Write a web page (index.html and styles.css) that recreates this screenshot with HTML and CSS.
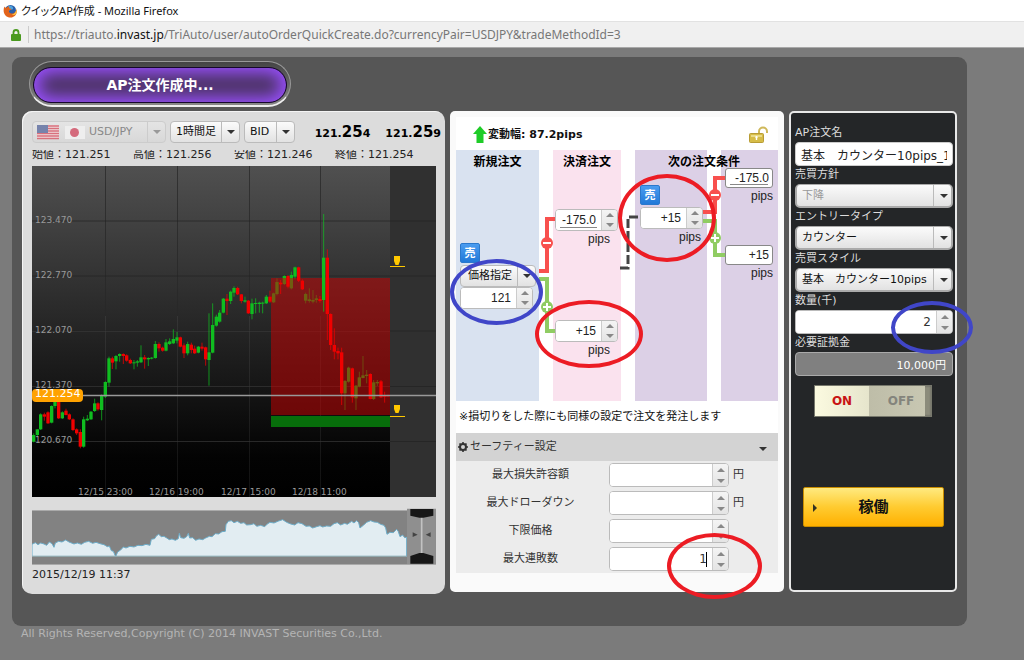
FILE: index.html
```html
<!DOCTYPE html>
<html lang="ja">
<head>
<meta charset="utf-8">
<title>クイックAP作成</title>
<link rel="stylesheet" href="styles.css">
</head>
<body>
<header class="titlebar">
  <svg class="fox" viewBox="0 0 14 14" aria-hidden="true">
    <circle cx="7.500" cy="6.500" r="5.500" fill="#2a5ea8"/>
    <path d="M5 2c3-1 6 1 5 3-1 1-3 0-4 2" fill="#4fa3dd"/>
    <path d="M1.500 2.500C.2 5 .2 9 2.500 11.500c3 3 8 2.600 10.300-.8 1-1.600 1.300-3.600.8-5.700-.6 3-2.600 4.800-5 4.500-2-.3-3-1.700-2.500-3 .6-.6 1.600-.3 2.200-.7.400-.5-.8-1.300-1.800-1.300C5.800 3.500 6 2.800 6.500 2.500 5 2.300 4 3 3.500 3.700 2.500 3.800 2 3.500 1.500 2.500z" fill="#e2641b"/>
    <path d="M13.600 5c-.4 3-2 5.200-5 5.600 2 .8 3.700.2 4.600-.9.700-1.400.8-3.200.4-4.700z" fill="#f9c440"/>
  </svg>
  <span>クイックAP作成 - Mozilla Firefox</span>
</header>
<div class="urlbar">
  <svg class="padlock" viewBox="0 0 10 12" aria-hidden="true"><path d="M2.500 6V3.500a2.500 2.500 0 0 1 5 0V6" fill="none" stroke="#4a9a1f" stroke-width="1.800"/><rect x="0" y="5" width="10" height="7" rx="1" fill="#4a9a1f"/></svg>
  <span class="url">https://triauto.<b>invast.jp</b>/TriAuto/user/autoOrderQuickCreate.do?currencyPair=USDJPY&amp;tradeMethodId=3</span>
</div>

<main class="app">
  <h1 class="status"><span>AP注文作成中...</span></h1>
  <div class="panels">
    <section class="panel chart-panel">
      <div class="toolbar">
        <div class="pick pair">
          <svg class="flags" viewBox="0 0 48 16" aria-hidden="true">
            <path d="M0 1h22v14H0z" fill="#f0dfe1"/>
            <path d="M0 2h22M0 4.500h22M0 7h22M0 9.500h22M0 12h22M0 14.500h22" stroke="#d8707c" stroke-width="1.300"/>
            <path d="M0 1h11v8H0z" fill="#7683ac"/>
            <path d="M28 2h20v13H28z" fill="#eee"/><circle cx="37.500" cy="8.500" r="4.500" fill="#d46a7c"/>
          </svg>
          <select aria-label="通貨ペア" disabled><option>USD/JPY</option></select>
        </div>
        <div class="pick span"><select aria-label="足種"><option>1時間足</option></select></div>
        <div class="pick side"><select aria-label="売買"><option>BID</option></select></div>
        <div class="rates">
          <span>121.<b>25</b>4</span>
          <span>121.<b>25</b>9</span>
        </div>
      </div>
      <div class="ohlc"><span>始値：121.251</span><span>高値：121.256</span><span>安値：121.246</span><span>終値：121.254</span></div>
      <svg class="chart" viewBox="0 0 404 331" role="img" aria-label="USD/JPY 1時間足">
        <defs><linearGradient id="sky" x1="0" y1="0" x2="0" y2="1"><stop offset="0" stop-color="#505050"/><stop offset=".88" stop-color="#030303"/><stop offset="1" stop-color="#000"/></linearGradient></defs>
        <rect width="404" height="331" fill="url(#sky)"/>
        <path d="M73.500 0v331M145.500 0v331M217.500 0v331M288.500 0v331" stroke="#888" stroke-opacity=".14"/>
        <path d="M73.500 0v150M145.500 0v150M217.500 0v150M288.500 0v150" stroke="#222" stroke-opacity=".7"/>
        <rect x="358" width="46" height="331" fill="#303030"/>
        <path d="M0 55h404M0 110h404M0 165h404M0 220.500h404M0 275.500h404" stroke="#222" stroke-opacity=".7"/>
        <path d="M0 165.500h358M0 220.500h358M0 275.500h358" stroke="#888" stroke-opacity=".14"/>
        <g class="candles" id="up" transform="translate(-8 134) scale(.33333)"></g>
        <path d="M239 112H358V249H239z" fill="#cd0000" fill-opacity=".5"/>
        <path d="M239 250H358V261H239z" fill="#076e0b"/>
        <g class="candles" id="down" transform="translate(-8 134) scale(.33333)"></g>
        <path d="M0 229.500h404" stroke="#999" stroke-width="1.500"/>
        <g fill="#ffc800"><path d="M362 90h6v5l-1.500 4h-3l-1.500-4zM358 100h15v1h-15zM362 239h6v4l-1.500 4h-3l-1.500-4zM358 250h15v1h-15z"/></g>
        <g class="axis">
          <text x="3" y="57">123.470</text><text x="3" y="112">122.770</text><text x="3" y="167">122.070</text><text x="3" y="222">121.370</text><text x="3" y="277">120.670</text>
          <text x="46" y="329">12/15 23:00</text><text x="117" y="329">12/16 19:00</text><text x="189" y="329">12/17 15:00</text><text x="260" y="329">12/18 11:00</text>
        </g>
        <rect y="223" width="51" height="13" rx="4" fill="#ffa200"/>
        <text class="now" x="3" y="231">121.254</text>
      </svg>
      <svg class="overview" viewBox="0 0 404 58" aria-hidden="true">
        <rect y="2" width="404" height="55" fill="#828282"/>
        <path d="M0 2.500h375M0 56.500h404" stroke="#aaa"/>
        <g transform="translate(-8 -208) scale(.33333)">
          <path d="M24 733L34 728 42 734 50 729 60 732 68 736 76 726 84 731 90 742 94 729 104 724 114 726 125 720 135 726 150 732 160 729 172 733 182 727 194 724 206 730 216 727 228 731 240 734 250 740 256 738 262 752 268 754 275 770 281 756 290 750 298 741 306 744 318 739 330 741 342 736 354 737 366 733 378 736 382 718 392 716 397 708 404 703 412 710 420 709 428 714 436 719 444 717 454 721 463 716 466 700 470 713 480 715 488 710 493 700 497 714 506 713 515 721 525 717 536 719 545 714 556 709 564 710 574 701 584 702 594 695 604 694 606 674 613 664 622 662 630 668 640 664 650 670 660 668 668 675 680 674 690 671 698 679 710 676 722 680 730 672 738 667 750 669 764 663 776 659 788 667 800 672 812 675 822 668 834 671 846 679 856 678 866 684 878 680 888 677 896 681 908 678 920 679 930 671 940 668 950 675 962 670 970 673 983 664 990 669 998 662 1004 668 1008 684 1018 676 1028 667 1040 662 1050 666 1060 667 1070 673 1080 676 1085 684 1089 703 1098 697 1108 698 1118 688 1123 695 1128 710 1136 705 1142 713 1148 712V769H24z" fill="#e2edf2" stroke="#6cadc9" stroke-width="3"/>
          <path d="M24 769H1148" stroke="#98a8a8" stroke-width="3"/>
          <path d="M1149 626h87v166h-87z" fill="#8f8f8f"/>
          <path d="M1193 650v110" stroke="#c2c2c2" stroke-width="5"/>
          <path d="M1159 627h69v20l-30 6h-12l-27-6zM1159 791h69v-23l-30-9h-12l-27 9z" fill="#171717"/>
          <path d="M1166 697v14l15-7zM1220 697v14l-15-7z" fill="#444"/>
        </g>
      </svg>
      <time class="stamp">2015/12/19 11:37</time>
    </section>

    <section class="panel order-panel">
      <div class="range">
        <svg class="arrow-up" viewBox="0 0 14 17" aria-hidden="true"><path d="M7 0l7 8h-3.500v9h-7V8H0z" fill="#1fcc28"/></svg>
        <strong>変動幅: 87.2pips</strong>
        <svg class="unlock" viewBox="0 0 20 18" aria-hidden="true"><path d="M10 8V5.500a4 4 0 0 1 8 0V7" fill="none" stroke="#cfb85a" stroke-width="2"/><rect x=".5" y="7.500" width="14" height="9" rx="1" fill="#d6bc48" stroke="#b89c35"/><path d="M2 9h11v2H2z" fill="#eadb87"/><path d="M7.500 10a1.200 1.200 0 0 1 .7 2.200V14H6.800v-1.800A1.200 1.200 0 0 1 7.500 10z" fill="#fff"/></svg>
      </div>
      <div class="flow">
        <div class="lane lane-new"><h2>新規注文</h2></div>
        <div class="lane lane-close"><h2>決済注文</h2></div>
        <div class="lane lane-next"></div>
        <div class="lane lane-after"></div>
        <h2 class="next-title">次の注文条件</h2>
        <svg class="wires" viewBox="0 0 322 251" aria-hidden="true">
          <g fill="none" stroke-width="4">
            <path d="M83 121H91V69H99M246 62H259V28H269" stroke="#f8504e"/>
            <path d="M83 129H91V181H99M246 71H259V105H269" stroke="#90cc63"/>
            <path d="M164 118H172V67H184" stroke="#444" stroke-width="3" stroke-dasharray="9 3"/>
          </g>
          <g fill="#f8504e"><circle cx="91" cy="93" r="6"/><circle cx="259" cy="45" r="6"/></g>
          <g fill="#90cc63"><circle cx="91" cy="157" r="6"/><circle cx="259" cy="88" r="6"/></g>
          <path d="M87 93h8M255 45h8M87 157h8M91 153v8M255 88h8M259 84v8" stroke="#fff" stroke-width="2"/>
        </svg>
        <span class="tag tag-entry">売</span>
        <div class="node node-entry">
          <div class="pick"><select aria-label="注文方法"><option>価格指定</option></select></div>
          <div class="spin"><input aria-label="価格" value="121"><span class="steps"><button aria-label="増やす"></button><button aria-label="減らす"></button></span></div>
        </div>
        <div class="node node-loss"><div class="spin"><input class="lined" aria-label="損切り" value="-175.0"><span class="steps"><button aria-label="増やす"></button><button aria-label="減らす"></button></span></div><span>pips</span></div>
        <div class="node node-gain"><div class="spin"><input aria-label="利確" value="+15"><span class="steps"><button aria-label="増やす"></button><button aria-label="減らす"></button></span></div><span>pips</span></div>
        <span class="tag tag-next">売</span>
        <div class="node node-next"><div class="spin"><input aria-label="次の注文" value="+15"><span class="steps"><button aria-label="増やす"></button><button aria-label="減らす"></button></span></div><span>pips</span></div>
        <div class="node node-next-loss"><input class="plain lined" aria-label="次の損切り" value="-175.0"><span>pips</span></div>
        <div class="node node-next-gain"><input class="plain" aria-label="次の利確" value="+15"><span>pips</span></div>
      </div>
      <p class="note">※損切りをした際にも同様の設定で注文を発注します</p>
      <div class="safety">
        <button class="safety-head">
          <svg viewBox="0 0 10 10" aria-hidden="true"><circle cx="5" cy="5" r="3" fill="none" stroke="#333" stroke-width="2"/><path d="M5 0v2M5 8v2M0 5h2M8 5h2M1.500 1.500l1.400 1.400M7.100 7.100l1.400 1.400M8.500 1.500L7.100 2.900M1.500 8.500l1.400-1.400" stroke="#333" stroke-width="1.600"/></svg>
          <span>セーフティー設定</span>
        </button>
        <div class="row"><label for="s1">最大損失許容額</label><div class="spin"><input id="s1"><span class="steps"><button aria-label="増やす"></button><button aria-label="減らす"></button></span></div><span>円</span></div>
        <div class="row"><label for="s2">最大ドローダウン</label><div class="spin"><input id="s2"><span class="steps"><button aria-label="増やす"></button><button aria-label="減らす"></button></span></div><span>円</span></div>
        <div class="row"><label for="s3">下限価格</label><div class="spin"><input id="s3"><span class="steps"><button aria-label="増やす"></button><button aria-label="減らす"></button></span></div></div>
        <div class="row"><label for="s4">最大連敗数</label><div class="spin editing"><input id="s4" value="1"><span class="steps"><button aria-label="増やす"></button><button aria-label="減らす"></button></span></div></div>
      </div>
      <i class="ring blue ring-entry"></i><i class="ring red ring-gain"></i><i class="ring red ring-next"></i><i class="ring red ring-streak"></i>
    </section>

    <section class="panel form-panel">
      <label for="name">AP注文名</label>
      <input class="text" id="name" value="基本　カウンター10pips_1">
      <label for="policy">売買方針</label>
      <div class="pick"><select id="policy" disabled><option>下降</option></select></div>
      <label for="entry">エントリータイプ</label>
      <div class="pick"><select id="entry"><option>カウンター</option></select></div>
      <label for="style">売買スタイル</label>
      <div class="pick"><select id="style"><option>基本　カウンター10pips</option></select></div>
      <label for="qty">数量(千)</label>
      <div class="spin"><input id="qty" value="2"><span class="steps"><button aria-label="増やす"></button><button aria-label="減らす"></button></span></div>
      <label for="margin">必要証拠金</label>
      <input class="margin" id="margin" value="10,000円" readonly>
      <div class="toggle"><button class="on">ON</button><button class="off">OFF</button></div>
      <button class="run">稼働</button>
      <i class="ring blue ring-qty"></i>
    </section>
  </div>
</main>
<footer class="copy">All Rights Reserved,Copyright (C) 2014 INVAST Securities Co.,Ltd.</footer>
<script src="candles.js"></script>
</body>
</html>
```

FILE: candles.js
```js
// direction, body top, body bottom, high, low (three units per chart pixel)
const bars = `G 405 425 400 427|G 388 405 388 408|G 343 388 340 390|R 343 350 338 362|R 337 370 334 372|G 318 368 316 370|G 306 318 300 325|R 306 355 306 357|G 337 355 334 357|R 332 345 326 346|R 343 358 340 360|R 358 390 355 393|R 388 400 385 405|R 396 440 388 445|G 358 440 350 443|G 356 361 345 363|G 335 358 333 360|G 310 333 296 336|R 310 328 307 332|G 288 330 283 361|G 246 290 244 294|G 175 248 170 260|R 175 188 170 207|G 168 184 165 208|G 162 168 160 185|R 162 168 160 192|R 166 182 163 185|R 180 190 176 192|G 187 190 180 208|G 184 188 180 200|G 172 187 136 189|R 172 178 165 206|G 174 178 172 198|G 173 176 171 178|G 132 174 123 176|R 132 145 127 155|R 143 152 140 155|G 127 152 117 154|G 124 132 115 135|G 117 130 88 132|G 112 122 96 130|R 112 140 110 142|R 136 160 130 174|G 132 160 125 166|R 134 150 128 160|R 146 160 137 162|G 140 158 138 160|R 140 146 128 152|R 142 178 140 197|G 157 180 40 257|G 75 158 10 160|G 50 77 44 80|G 38 65 30 68|G -4 38 -6 40|R -4 3 -18 45|G -25 3 -28 12|G -36 -22 -41 -10|R -36 -17 -40 -15|R -17 3 -18 10|G 1 5 -10 8|R 2 40 0 42|G 10 42 -4 58|G 9 12 -5 40|G 8 12 5 38|G 8 11 5 40|G -10 10 -15 12|R -10 5 -28 9|G -20 7 -22 9|G -54 -18 -65 -14|R -52 -47 -60 -18|G -72 -48 -74 -45|R -72 -40 -75 -35|G -75 -35 -85 -32|G -98 -70 -100 -62|R -98 -58 -100 -54|R -58 -32 -62 -30|G -18 2 -22 10|G -2 3 -35 8|G 0 5 -30 10|G -5 0 -15 8|R -3 3 -12 8|B -127 0 -258 35|R -127 42 -152 120|R 42 135 40 150|R 135 155 85 178|R 153 160 143 178|R 157 280 143 315|G 243 280 240 330|G 203 245 200 248|R 205 292 203 308|G 257 295 255 330|G 232 260 215 262|G 226 234 168 235|G 224 228 210 250|R 222 297 220 298|G 247 297 240 300|G 246 250 240 258|R 244 292 240 294|R 286 290 275 308|R 286 289 284 290`;
const out = { up: "", down: "" };
bars.split("|").forEach((bar, i) => {
  const [kind, top, bottom, high, low] = bar.split(" ");
  const x = Math.round(29 + 10.74 * i);
  const color = kind === "R" ? "#f00000" : "#10bd20";
  out[kind === "G" ? "up" : "down"] +=
    `<path d="M${x} ${high}V${low}" stroke="${color}" stroke-opacity=".75" stroke-width="3"/>` +
    `<path d="M${x} ${top}V${bottom}" stroke="${color}" stroke-width="10"/>`;
});
document.getElementById("up").innerHTML = out.up;
document.getElementById("down").innerHTML = out.down;
```

FILE: styles.css
```css
* { box-sizing: border-box; }
body {
  margin: 0;
  min-height: 100vh;
  background: #7b7b7b;
  color: #222;
  font: 11px/16px "DejaVu Sans", "Noto Sans CJK JP", sans-serif;
}
h1, h2, p { margin: 0; }
input, select, button { font: inherit; color: inherit; margin: 0; border: 0; padding: 0; min-width: 0; }
svg { display: block; }

.titlebar {
  display: flex; align-items: center; gap: 4px;
  height: 21px; padding: 0 3px;
  background: #fff; color: #111;
  font: 11px/16px "Noto Sans", "Noto Sans CJK JP", sans-serif;
  font-feature-settings: "palt";
}
.fox { width: 14px; height: 14px; }
.urlbar {
  display: flex; align-items: center; gap: 7px;
  height: 27px; padding: 0 11px;
  background: #f0f0f0; border-top: 1px solid #e2e2e2; border-bottom: 1px solid #a8a8a8;
}
.padlock { width: 10px; height: 12px; }
.url {
  padding-left: 5px; border-left: 1px solid #ccc;
  color: #777; font: 12px/17px "Noto Sans", sans-serif;
  white-space: nowrap; overflow: hidden;
}
.url b { font-weight: 400; color: #111; }

.app {
  margin: 9px 57px 0 12px;
  padding: 4px 10px 32px;
  background: #565656;
  border-radius: 9px;
}
.status {
  width: 262px; height: 46px; margin: 0 0 4px 7px; padding: 5px 3px 2px;
  border: 1px solid #999; border-bottom: 2px solid #eee; border-radius: 23px;
  background: linear-gradient(#444, #888);
  font-size: 14px; color: #fff;
}
.status span {
  display: flex; align-items: center; justify-content: center; height: 100%;
  border: 1px solid #16082b; border-radius: 20px;
  background: #4c3366; box-shadow: inset 0 0 16px 5px #9a50ff;
}
.panels { display: grid; grid-template-columns: minmax(0, 1fr) 334px 168px; gap: 5px; align-items: start; }
.panel { position: relative; }

.chart-panel { padding: 10px 9px 11px 10px; background: #dcdcdc; border: 0; border-radius: 10px; box-shadow: inset 1px 1px 0 #f4f4f4; }
.toolbar { display: flex; gap: 4px; height: 22px; }
.pick { position: relative; }
.pick select {
  appearance: none; width: 100%; height: 100%; padding: 0 22px 0 5px;
  border: 1px solid #bbb; border-radius: 4px;
  background: linear-gradient(#bbb, #bbb) right 17px center / 1px 100% no-repeat, linear-gradient(#fbfbfb, #e2e2e2);
  color: #111; opacity: 1;
}
.pick::after {
  content: ""; position: absolute; right: 5px; top: 50%; margin-top: -2px;
  border: 4px solid transparent; border-top-color: #333; border-bottom: 0; pointer-events: none;
}
.pair { width: 134px; }
.pair select { padding-left: 56px; border-color: #ccc; background-color: #ddd; background-image: linear-gradient(#ccc, #ccc), linear-gradient(#e4e4e4, #d8d8d8); color: #888; }
.pair::after { border-top-color: #999; }
.flags { position: absolute; left: 5px; top: 3px; width: 48px; height: 16px; }
.span { width: 70px; }
.side { width: 51px; }
.rates { flex: 1; display: flex; justify-content: flex-end; gap: 15px; margin-right: -5px; font: bold 11px/22px "DejaVu Sans", sans-serif; color: #000; white-space: nowrap; }
.rates b { font-size: 15px; }
.ohlc { display: grid; grid-template-columns: repeat(4, 1fr); height: 10px; margin: 7px 0 6px; line-height: 10px; overflow: hidden; }
.chart, .overview { width: 100%; height: auto; }
.candles { fill: none; }
.axis { fill: #999; font-size: 9px; }
.now { fill: #fff; font-size: 11px; }
.overview { margin: 11px 0 1px; }
.stamp { display: block; color: #222; }

.order-panel { padding: 6px 6px 19px; background: #fafafa; border-radius: 5px; }
.range { display: flex; align-items: center; gap: 1px; height: 33px; padding: 2px 9px 0 17px; background: #fff; color: #111; }
.arrow-up { width: 14px; height: 17px; }
.unlock { width: 20px; height: 18px; margin-left: auto; }
.flow {
  position: relative; display: grid; height: 251px;
  grid-template-columns: 83px 68px 72px 57px; column-gap: 14px;
  background: #fff; font-family: "Liberation Sans", "Noto Sans CJK JP", sans-serif;
}
.flow h2 { font-size: 12px; line-height: 24px; text-align: center; color: #000; }
.lane-new { background: #d9e2f0; }
.lane-close { background: #fae2ee; }
.lane-next, .lane-after { background: #dcd0e6; }
.next-title { position: absolute; left: 174px; right: 0; top: 0; }
.wires { position: absolute; left: 0; top: 0; width: 322px; height: 251px; }
.tag { position: absolute; width: 20px; height: 20px; border: 1px solid #2a78cc; border-radius: 2px; background: linear-gradient(#4a9cf0, #2179d8); color: #fff; font-weight: 700; line-height: 18px; text-align: center; }
.tag-entry { left: 4px; top: 93px; }
.tag-next { left: 184px; top: 35px; }
.node { position: absolute; font-size: 12px; text-align: right; }
.node > span { display: block; padding-right: 8px; color: #222; }
.node .spin { width: 63px; height: 22px; }
.node-entry { left: 4px; top: 115px; }
.node-entry .pick { width: 76px; height: 22px; font: 11px/16px "DejaVu Sans", "Noto Sans CJK JP", sans-serif; }
.node-entry .pick select { padding-left: 7px; }
.node-entry .spin { width: 73px; }
.node-loss { left: 99px; top: 59px; }
.node-gain { left: 99px; top: 170px; }
.node-next { left: 184px; top: 57px; }
.node-next > span { padding-right: 2px; }
.node-next-loss { left: 269px; top: 18px; }
.node-next-gain { left: 269px; top: 95px; }
.node .plain { display: block; width: 48px; height: 20px; padding: 0 3px; border: 1px solid #888; border-radius: 3px; background-color: #fff; text-align: right; }
.node .plain + span { padding-right: 0; }

.spin { position: relative; display: flex; height: 24px; border: 1px solid #bbb; border-radius: 4px; background: #fff; overflow: hidden; }
.spin input { flex: 1; width: 0; padding: 0 5px; background-color: #fff; text-align: right; }
.lined { background-image: linear-gradient(#888, #888); background-position: center bottom 2px; background-size: calc(100% - 8px) 1px; background-repeat: no-repeat; }
.steps { display: grid; grid-template-rows: 1fr 1fr; width: 16px; padding: 0; border-left: 1px solid #ccc; background: linear-gradient(#f4f4f4, #e4e4e4); }
.steps button { display: grid; place-items: center; background: none; }
.steps button::before { content: ""; border: 4px solid transparent; border-bottom-color: #888; border-top: 0; }
.steps button + button::before { border-top: 4px solid #888; border-bottom: 0; }

.note { padding: 7px 3px 8px; line-height: 17px; background: #fff; color: #111; white-space: nowrap; }
.safety { background: #ececec; }
.safety-head { position: relative; display: flex; align-items: center; gap: 2px; width: 100%; height: 28px; padding: 0 2px; background: #d3d3d3; color: #333; }
.safety-head svg { width: 10px; height: 10px; }
.safety-head::after { content: ""; position: absolute; right: 11px; top: 14px; border: 4px solid transparent; border-top-color: #333; border-bottom: 0; }
.row { display: grid; grid-template-columns: 149px 120px 1fr; align-items: center; height: 28px; column-gap: 4px; color: #333; }
.row label { text-align: center; }
.row .spin { font-size: 12px; }
.editing::after { content: ""; position: absolute; right: 21px; top: 4px; width: 1px; height: 15px; background: #000; }

.form-panel {
  display: flex; flex-direction: column; min-height: 481px;
  padding: 11px 2px 0 4px; border: 2px solid #e8e8e8; border-radius: 5px;
  background: #242628; color: #ddd;
}
.form-panel label { height: 18px; line-height: 18px; }
.form-panel .pick, .form-panel .text, .form-panel .margin { height: 24px; }
.form-panel .pick select { border: 2px solid #aaa; border-top-width: 1px; border-radius: 5px; }
.form-panel .pick select:disabled { color: #999; }
.text { padding: 0 5px; border: 1px solid #ccc; border-radius: 4px; background: #fff; color: #222; font-size: 12px; }
.form-panel .spin input { padding-right: 5px; color: #333; font-size: 12px; }
.margin { padding: 0 6px; border: 1px solid #aaa; border-radius: 4px; background: #808080; color: #fff; text-align: right; }
.toggle { display: grid; grid-template-columns: 54px 56px 6px; width: 118px; height: 32px; margin: 9px 0 0 19px; border: 1px solid #77786c; background: #8b8b7b; box-shadow: inset 0 0 2px #555; }
.toggle button { font-weight: 700; font-size: 12px; }
.toggle .on { background: linear-gradient(90deg, #fbfae0, #e6e5cc); color: #c81414; }
.toggle .off { padding-left: 8px; background: linear-gradient(90deg, #bebda8, #c8c7b2); color: #84847c; }
.run {
  position: relative; height: 40px; margin: 70px 9px 0 8px;
  border: 1px solid #c98d00; border-radius: 2px;
  background: linear-gradient(#ffea80, #ffcb30 50%, #ffb000);
  color: #111; font-size: 15px; font-weight: 700;
}
.run::before { content: ""; position: absolute; left: 9px; top: 16px; border: 4px solid transparent; border-left-color: #332; border-right: 0; }

.ring { position: absolute; border: 4px solid; border-radius: 50%; pointer-events: none; }
.blue { border-color: #4046c8; }
.red { border-color: #ec1c24; }
.ring-entry { left: 0; top: 148px; width: 93px; height: 66px; }
.ring-gain { left: 85px; top: 189px; width: 108px; height: 68px; }
.ring-next { left: 168px; top: 63px; width: 98px; height: 88px; }
.ring-streak { left: 217px; top: 422px; width: 95px; height: 66px; }
.ring-qty { left: 100px; top: 188px; width: 82px; height: 53px; }
.copy { padding: 0 21px; color: #b4b4b4; line-height: 16px; }
```
